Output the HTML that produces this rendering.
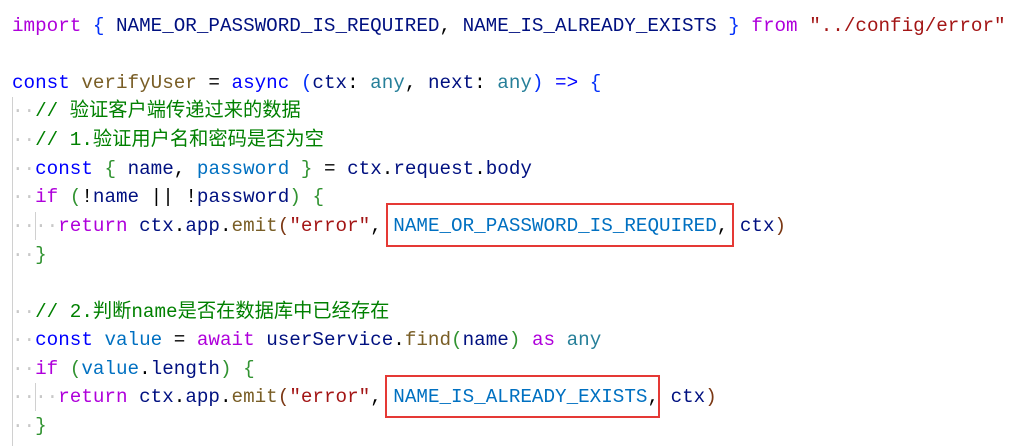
<!DOCTYPE html>
<html><head><meta charset="utf-8"><style>
body{margin:0;background:#fff;width:1025px;height:446px;overflow:hidden;position:relative}
.l{position:absolute;left:12px;white-space:pre;font-family:"Liberation Mono","Noto Sans CJK SC",monospace;font-size:19.25px;line-height:28px;color:#000}
.k{color:#af00db}.b{color:#0000ff}.f{color:#795e26}.v{color:#001080}.s{color:#a31515}.c{color:#008000}.t{color:#267f99}.n{color:#0070c1}.b1{color:#0431fa}.b2{color:#319331}.b3{color:#7b3814}.d{color:#c8c8c8}
.g{position:absolute;width:1px;background:#d0d0d0}
.box{position:absolute;border:2px solid #e53935;box-sizing:border-box}
</style></head><body>
<div class="g" style="left:12px;top:97px;height:349px"></div>
<div class="g" style="left:35px;top:212px;height:28px"></div>
<div class="g" style="left:35px;top:383px;height:28px"></div>
<div class="l" style="top:12px"><span class="k">import</span> <span class="b1">{</span> <span class="v">NAME_OR_PASSWORD_IS_REQUIRED</span>, <span class="v">NAME_IS_ALREADY_EXISTS</span> <span class="b1">}</span> <span class="k">from</span> <span class="s">"../config/error"</span></div>
<div class="l" style="top:69px"><span class="b">const</span> <span class="f">verifyUser</span> = <span class="b">async</span> <span class="b1">(</span><span class="v">ctx</span>: <span class="t">any</span>, <span class="v">next</span>: <span class="t">any</span><span class="b1">)</span> <span class="b">=&gt;</span> <span class="b1">{</span></div>
<div class="l" style="top:97px"><span class="d">··</span><span class="c">// 验证客户端传递过来的数据</span></div>
<div class="l" style="top:126px"><span class="d">··</span><span class="c">// 1.验证用户名和密码是否为空</span></div>
<div class="l" style="top:155px"><span class="d">··</span><span class="b">const</span> <span class="b2">{</span> <span class="v">name</span>, <span class="n">password</span> <span class="b2">}</span> = <span class="v">ctx</span>.<span class="v">request</span>.<span class="v">body</span></div>
<div class="l" style="top:183px"><span class="d">··</span><span class="k">if</span> <span class="b2">(</span>!<span class="v">name</span> || !<span class="v">password</span><span class="b2">)</span> <span class="b2">{</span></div>
<div class="l" style="top:212px"><span class="d">····</span><span class="k">return</span> <span class="v">ctx</span>.<span class="v">app</span>.<span class="f">emit</span><span class="b3">(</span><span class="s">"error"</span>, <span class="n">NAME_OR_PASSWORD_IS_REQUIRED</span>, <span class="v">ctx</span><span class="b3">)</span></div>
<div class="l" style="top:241px"><span class="d">··</span><span class="b2">}</span></div>
<div class="l" style="top:298px"><span class="d">··</span><span class="c">// 2.判断name是否在数据库中已经存在</span></div>
<div class="l" style="top:326px"><span class="d">··</span><span class="b">const</span> <span class="n">value</span> = <span class="k">await</span> <span class="v">userService</span>.<span class="f">find</span><span class="b2">(</span><span class="v">name</span><span class="b2">)</span> <span class="k">as</span> <span class="t">any</span></div>
<div class="l" style="top:355px"><span class="d">··</span><span class="k">if</span> <span class="b2">(</span><span class="n">value</span>.<span class="v">length</span><span class="b2">)</span> <span class="b2">{</span></div>
<div class="l" style="top:383px"><span class="d">····</span><span class="k">return</span> <span class="v">ctx</span>.<span class="v">app</span>.<span class="f">emit</span><span class="b3">(</span><span class="s">"error"</span>, <span class="n">NAME_IS_ALREADY_EXISTS</span>, <span class="v">ctx</span><span class="b3">)</span></div>
<div class="l" style="top:412px"><span class="d">··</span><span class="b2">}</span></div>
<div class="box" style="left:386px;top:203px;width:348px;height:44px"></div>
<div class="box" style="left:385px;top:375px;width:275px;height:43px"></div>
</body></html>
